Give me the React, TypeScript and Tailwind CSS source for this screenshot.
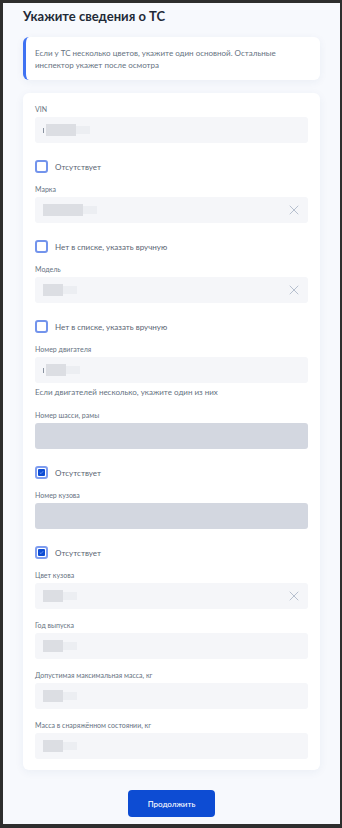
import React from "react";

function Blur({ w, tick }: { w: number; tick?: boolean }) {
  return (
    <div className="flex items-center">
      {tick && <div className="w-[1px] h-[5px] bg-[#8a93a0] mr-[2px]" />}
      <div className="flex items-center blur-[0.6px]">
        <div className="h-[12px] bg-[#dcdee3]" style={{ width: w }} />
        <div className="h-[8px] w-[14px] bg-[#eceef2]" />
      </div>
    </div>
  );
}

function Field({ label, blur, tick, clear, disabled, className }: any) {
  return (
    <div className={className}>
      <div className="h-[10px] leading-[10px] text-[7px] text-[#66727f] mb-[3px]">{label}</div>
      <div
        className={`h-[26px] rounded-[3px] flex items-center pl-[8px] pr-[9px] ${
          disabled ? "bg-[#d3d7e0]" : "bg-[#f5f6f9]"
        }`}
      >
        {!disabled && <div className="pl-[0px]">{blur && <Blur w={blur} tick={tick} />}</div>}
        <div className="flex-1" />
        {clear && (
          <svg width="10" height="10" viewBox="0 0 10 10" fill="none">
            <path d="M1 1L9 9M9 1L1 9" stroke="#b7c0cf" strokeWidth="1" strokeLinecap="round" />
          </svg>
        )}
      </div>
    </div>
  );
}

function Check({ label, checked }: { label: string; checked?: boolean }) {
  return (
    <div className="mt-[17px] h-[13px] flex items-center">
      <div
        className={`w-[13px] h-[13px] rounded-[3px] border-[2px] flex items-center justify-center ${
          checked ? "border-[#7d9cf0] bg-white" : "border-[#7394ec] bg-white"
        }`}
      >
        {checked && (
          <div className="w-[7px] h-[7px] bg-[#0d4cd3] rounded-[1px] flex items-center justify-center">
            <svg width="5" height="5" viewBox="0 0 5 5" fill="none">
              <path d="M0.8 2.6L2 3.7L4.2 1.2" stroke="#8fb0ff" strokeWidth="0.7" />
            </svg>
          </div>
        )}
      </div>
      <span className="ml-[7px] text-[8px] text-[#5b6573]">{label}</span>
    </div>
  );
}

export default function App() {
  return (
    <div
      className="w-[342px] h-[828px] bg-[#2e2e2e] pt-[3px] pl-[3px] pr-[2px] pb-[4px]"
      style={{ fontFamily: "Lato, 'Noto Sans', sans-serif" }}
    >
      <div className="h-full bg-[#f7f9fd] px-[20px] pt-[5px] flex flex-col">
        <h1 className="text-[13px] leading-[16px] font-bold text-[#1f2a38]">Укажите сведения о ТС</h1>

        {/* Инфо */}
        <div className="mt-[13px] bg-white rounded-[6px] border-l-[3px] border-[#3f72f2] pl-[9px] pr-[10px] pt-[10px] pb-[9px] shadow-[0_2px_8px_rgba(30,60,120,0.06)]">
          <p className="text-[8px] leading-[12px] text-[#66727f]">
            Если у ТС несколько цветов, укажите один основной. Остальные инспектор укажет после осмотра
          </p>
        </div>

        {/* Форма */}
        <div className="mt-[13px] bg-white rounded-[6px] px-[12px] pt-[11px] pb-[11px] shadow-[0_2px_10px_rgba(30,60,120,0.06)]">
          <Field label="VIN" blur={30} tick />
          <Check label="Отсутствует" />
          <Field className="mt-[11px]" label="Марка" blur={40} clear />
          <Check label="Нет в списке, указать вручную" />
          <Field className="mt-[11px]" label="Модель" blur={20} clear />
          <Check label="Нет в списке, указать вручную" />
          <Field className="mt-[11px]" label="Номер двигателя" blur={20} tick />
          <div className="mt-[4px] h-[10px] leading-[10px] text-[8px] text-[#66727f]">
            Если двигателей несколько, укажите один из них
          </div>
          <Field className="mt-[13px]" label="Номер шасси, рамы" disabled />
          <Check label="Отсутствует" checked />
          <Field className="mt-[11px]" label="Номер кузова" disabled />
          <Check label="Отсутствует" checked />
          <Field className="mt-[11px]" label="Цвет кузова" blur={20} clear />
          <Field className="mt-[11px]" label="Год выпуска" blur={20} />
          <Field className="mt-[11px]" label="Допустимая максимальная масса, кг" blur={20} />
          <Field className="mt-[11px]" label="Масса в снаряжённом состоянии, кг" blur={20} />
        </div>

        <div className="mt-[20px] flex justify-center">
          <button className="w-[87px] h-[27px] rounded-[4px] bg-[#0d4cd3] text-white text-[8px] font-medium">
            Продолжить
          </button>
        </div>
      </div>
    </div>
  );
}
